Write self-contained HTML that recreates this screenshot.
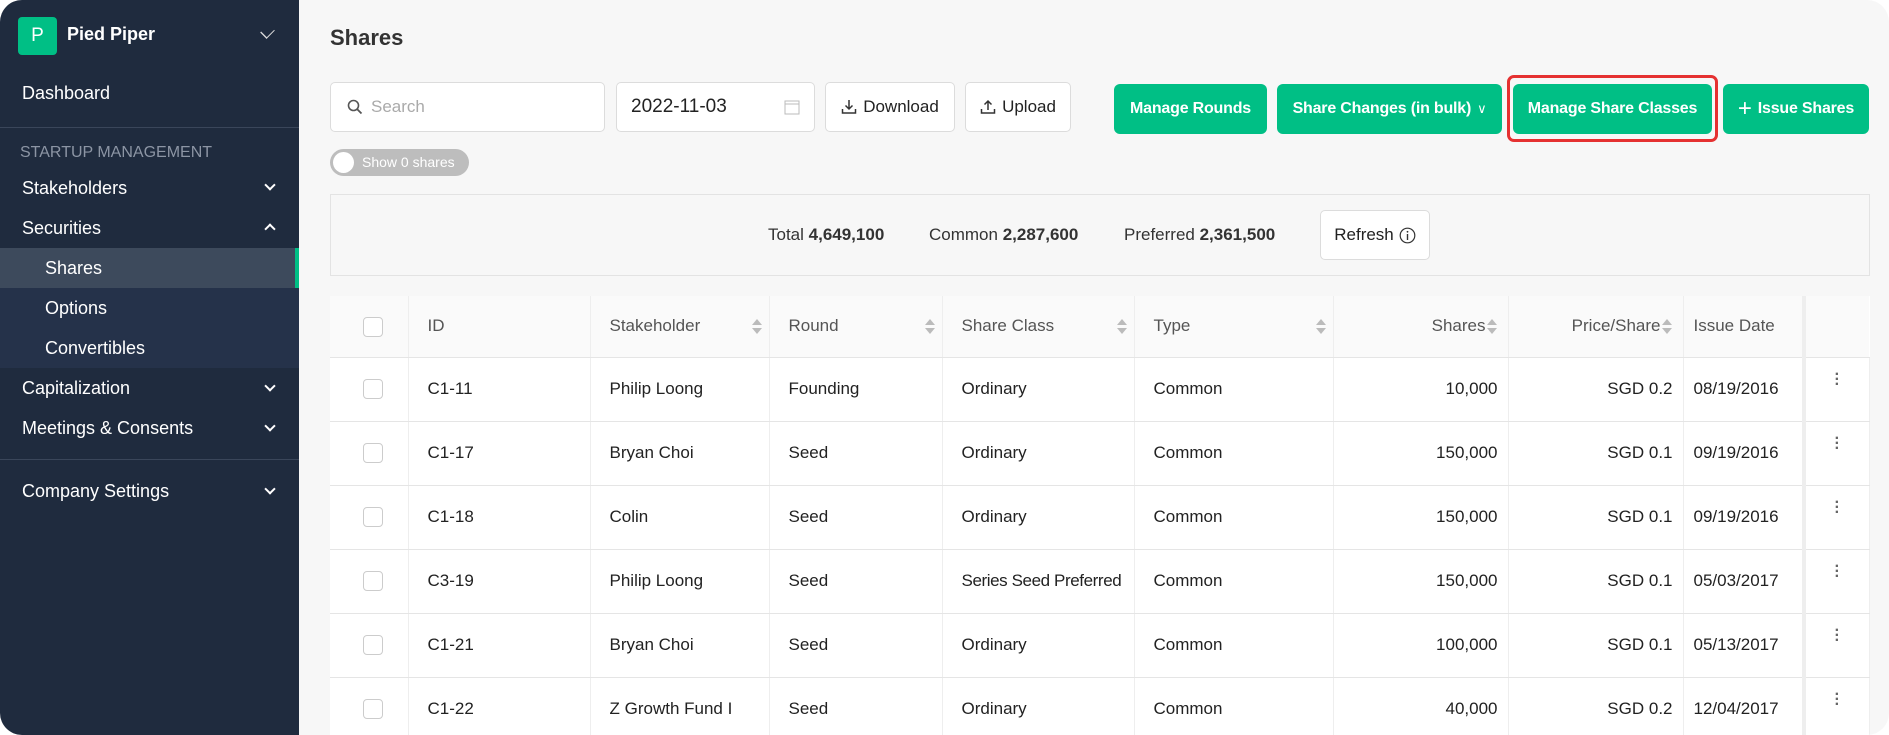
<!DOCTYPE html>
<html><head><meta charset="utf-8"><style>
*{box-sizing:border-box;margin:0;padding:0}
body{width:1889px;height:735px;background:#fff;font-family:"Liberation Sans",sans-serif;position:relative;overflow:hidden;color:#222}
.wrap{position:absolute;left:0;top:0;width:1889px;height:735px;border-radius:22px;overflow:hidden;background:#f7f7f7}
.side{position:absolute;left:0;top:0;width:299px;height:735px;background:#1f2b3e;color:#fff}
.a{position:absolute}
.side .it{position:absolute;left:22px;font-size:18px;color:#fff}
.chev{position:absolute;left:266px;width:8px;height:8px;border-right:2px solid #fff;border-bottom:2px solid #fff;transform:rotate(45deg)}
.btn{position:absolute;background:#fff;border:1px solid #dcdcdc;border-radius:5px;font-size:17px;display:flex;align-items:center;justify-content:center;color:#222}
.g{position:absolute;background:#00bf85;color:#fff;border-radius:6px;font-size:16px;font-weight:bold;display:flex;align-items:center;justify-content:center;height:50px;top:84px;letter-spacing:-0.2px}
table{position:absolute;left:330px;top:296px;width:1539px;border-collapse:collapse;background:#fff;font-size:17px;table-layout:fixed}
td,th{border-bottom:1px solid #e5e5e5;border-right:1px solid #eee;height:64px;text-align:left;padding-left:19px;font-weight:normal;white-space:nowrap;overflow:hidden}
th{background:#fafafa;height:61px;color:#555;position:relative}
td{color:#222}
.r{text-align:right;padding-right:10px;padding-left:0}
.cb{display:inline-block;width:20px;height:20px;border:1px solid #ccc;border-radius:4px;background:#fff;vertical-align:middle}
.sort{position:absolute;right:12px;top:23px;width:0;height:0}
.sort:before{content:"";position:absolute;left:-5px;top:0;border:5px solid transparent;border-bottom:6px solid #bbb;border-top:0}
.sort:after{content:"";position:absolute;left:-5px;top:9px;border:5px solid transparent;border-top:6px solid #bbb;border-bottom:0}
.dots{color:#666;font-weight:bold;text-align:center;padding:0;font-size:16px;line-height:5px;vertical-align:top;padding-top:14px}
</style></head><body><div class="wrap">
<div class="side">
 <div class="a" style="left:18px;top:17px;width:39px;height:38px;background:#00bf85;border-radius:4px;font-size:19px;display:flex;align-items:center;justify-content:center">P</div>
 <div class="a" style="left:67px;top:24px;font-size:18px;font-weight:bold">Pied Piper</div>
 <div class="a" style="left:263px;top:27px;width:9px;height:9px;border-right:1.5px solid #ddd;border-bottom:1.5px solid #ddd;transform:rotate(45deg) scaleY(1.3)"></div>
 <div class="it" style="top:83px">Dashboard</div>
 <div class="a" style="left:0;top:127px;width:299px;height:1px;background:#3a465a"></div>
 <div class="it" style="left:20px;top:144px;font-size:16px;color:#8c95a4">STARTUP MANAGEMENT</div>
 <div class="it" style="top:178px">Stakeholders</div><div class="chev" style="top:181px"></div>
 <div class="it" style="top:218px">Securities</div><div class="chev" style="top:225px;transform:rotate(225deg)"></div>
 <div class="a" style="left:0;top:248px;width:299px;height:120px;background:#25324a"></div>
 <div class="a" style="left:0;top:248px;width:299px;height:40px;background:#3d4a5c"></div>
 <div class="a" style="left:295px;top:248px;width:4px;height:40px;background:#00bf85"></div>
 <div class="it" style="left:45px;top:258px">Shares</div>
 <div class="it" style="left:45px;top:298px">Options</div>
 <div class="it" style="left:45px;top:338px">Convertibles</div>
 <div class="it" style="top:378px">Capitalization</div><div class="chev" style="top:382px"></div>
 <div class="it" style="top:418px">Meetings &amp; Consents</div><div class="chev" style="top:422px"></div>
 <div class="a" style="left:0;top:459px;width:299px;height:1px;background:#3a465a"></div>
 <div class="it" style="top:481px">Company Settings</div><div class="chev" style="top:485px"></div>
</div>
<div class="a" style="left:330px;top:25px;font-size:22px;font-weight:bold;color:#333">Shares</div>
<div class="btn" style="left:330px;top:82px;width:275px;height:50px;justify-content:flex-start;padding-left:16px;color:#aaa">
 <svg width="16" height="16" viewBox="0 0 16 16" style="margin-right:8px"><circle cx="6.5" cy="6.5" r="5" fill="none" stroke="#555" stroke-width="1.6"/><path d="M10 10l4.5 4.5" stroke="#555" stroke-width="1.8"/></svg>Search</div>
<div class="btn" style="left:616px;top:82px;width:199px;height:50px;justify-content:flex-start;padding-left:14px;font-size:19px">2022-11-03
 <svg width="16" height="16" viewBox="0 0 16 16" style="position:absolute;right:14px"><rect x="1" y="2" width="14" height="13" fill="none" stroke="#bbb"/><path d="M1 5h14" stroke="#bbb"/></svg></div>
<div class="btn" style="left:825px;top:82px;width:130px;height:50px">
 <svg width="16" height="16" viewBox="0 0 16 16" style="margin-right:6px"><path d="M8 1v9M4.5 6.5L8 10l3.5-3.5M1.5 10v4h13v-4" fill="none" stroke="#333" stroke-width="1.5"/></svg>Download</div>
<div class="btn" style="left:965px;top:82px;width:106px;height:50px">
 <svg width="16" height="16" viewBox="0 0 16 16" style="margin-right:6px"><path d="M8 11V2M4.5 5.5L8 2l3.5 3.5M1.5 10v4h13v-4" fill="none" stroke="#333" stroke-width="1.5"/></svg>Upload</div>
<div class="g" style="left:1114px;width:153px">Manage Rounds</div>
<div class="g" style="left:1277px;width:225px">Share Changes (in bulk) <span style="font-weight:normal;font-size:13px;margin-left:6px">&#8744;</span></div>
<div class="a" style="left:1507px;top:75px;width:211px;height:67px;border:3px solid #e53131;border-radius:7px"></div>
<div class="g" style="left:1513px;width:199px">Manage Share Classes</div>
<div class="g" style="left:1723px;width:146px"><span style="font-weight:normal;font-size:24px;margin-right:6px">+</span>Issue Shares</div>
<div class="a" style="left:330px;top:149px;width:139px;height:27px;background:#bdbdbd;border-radius:14px;color:#fff;font-size:14px;padding:5px 0 0 32px">Show 0 shares</div>
<div class="a" style="left:333px;top:152px;width:21px;height:21px;background:#fff;border-radius:50%"></div>
<div class="a" style="left:330px;top:194px;width:1540px;height:82px;border:1px solid #e3e3e3;background:#f7f7f7"></div>
<div class="a" style="left:768px;top:225px;font-size:17px;color:#333">Total <b>4,649,100</b></div>
<div class="a" style="left:929px;top:225px;font-size:17px;color:#333">Common <b>2,287,600</b></div>
<div class="a" style="left:1124px;top:225px;font-size:17px;color:#333">Preferred <b>2,361,500</b></div>
<div class="btn" style="left:1320px;top:210px;width:110px;height:50px">Refresh <svg width="17" height="17" viewBox="0 0 17 17" style="margin-left:5px"><circle cx="8.5" cy="8.5" r="7.3" fill="none" stroke="#333" stroke-width="1.2"/><path d="M8.5 7v6" stroke="#333" stroke-width="1.4"/><circle cx="8.5" cy="4.8" r="0.9" fill="#333"/></svg></div>
<table>
<colgroup><col style="width:78px"><col style="width:182px"><col style="width:179px"><col style="width:173px"><col style="width:192px"><col style="width:199px"><col style="width:175px"><col style="width:175px"><col style="width:121px"><col style="width:65px"></colgroup>
<tr><th style="padding-left:33px"><span class="cb"></span></th><th>ID</th><th>Stakeholder<span class="sort"></span></th><th>Round<span class="sort"></span></th><th>Share Class<span class="sort"></span></th><th>Type<span class="sort"></span></th><th class="r" style="padding-right:22px">Shares<span class="sort" style="right:16px"></span></th><th class="r" style="padding-right:22px">Price/Share<span class="sort" style="right:16px"></span></th><th style="padding-left:10px;border-right:4px solid #eee">Issue Date</th><th style="border-right:0"></th></tr>
<tr><td style="padding-left:33px"><span class="cb"></span></td><td>C1-11</td><td>Philip Loong</td><td>Founding</td><td>Ordinary</td><td>Common</td><td class="r">10,000</td><td class="r">SGD 0.2</td><td style="padding-left:10px;border-right:4px solid #eee">08/19/2016</td><td class="dots">·<br>·<br>·</td></tr>
<tr><td style="padding-left:33px"><span class="cb"></span></td><td>C1-17</td><td>Bryan Choi</td><td>Seed</td><td>Ordinary</td><td>Common</td><td class="r">150,000</td><td class="r">SGD 0.1</td><td style="padding-left:10px;border-right:4px solid #eee">09/19/2016</td><td class="dots">·<br>·<br>·</td></tr>
<tr><td style="padding-left:33px"><span class="cb"></span></td><td>C1-18</td><td>Colin</td><td>Seed</td><td>Ordinary</td><td>Common</td><td class="r">150,000</td><td class="r">SGD 0.1</td><td style="padding-left:10px;border-right:4px solid #eee">09/19/2016</td><td class="dots">·<br>·<br>·</td></tr>
<tr><td style="padding-left:33px"><span class="cb"></span></td><td>C3-19</td><td>Philip Loong</td><td>Seed</td><td style="letter-spacing:-0.4px">Series Seed Preferred</td><td>Common</td><td class="r">150,000</td><td class="r">SGD 0.1</td><td style="padding-left:10px;border-right:4px solid #eee">05/03/2017</td><td class="dots">·<br>·<br>·</td></tr>
<tr><td style="padding-left:33px"><span class="cb"></span></td><td>C1-21</td><td>Bryan Choi</td><td>Seed</td><td>Ordinary</td><td>Common</td><td class="r">100,000</td><td class="r">SGD 0.1</td><td style="padding-left:10px;border-right:4px solid #eee">05/13/2017</td><td class="dots">·<br>·<br>·</td></tr>
<tr><td style="padding-left:33px"><span class="cb"></span></td><td>C1-22</td><td>Z Growth Fund I</td><td>Seed</td><td>Ordinary</td><td>Common</td><td class="r">40,000</td><td class="r">SGD 0.2</td><td style="padding-left:10px;border-right:4px solid #eee">12/04/2017</td><td class="dots">·<br>·<br>·</td></tr>
</table>
</div></body></html>
